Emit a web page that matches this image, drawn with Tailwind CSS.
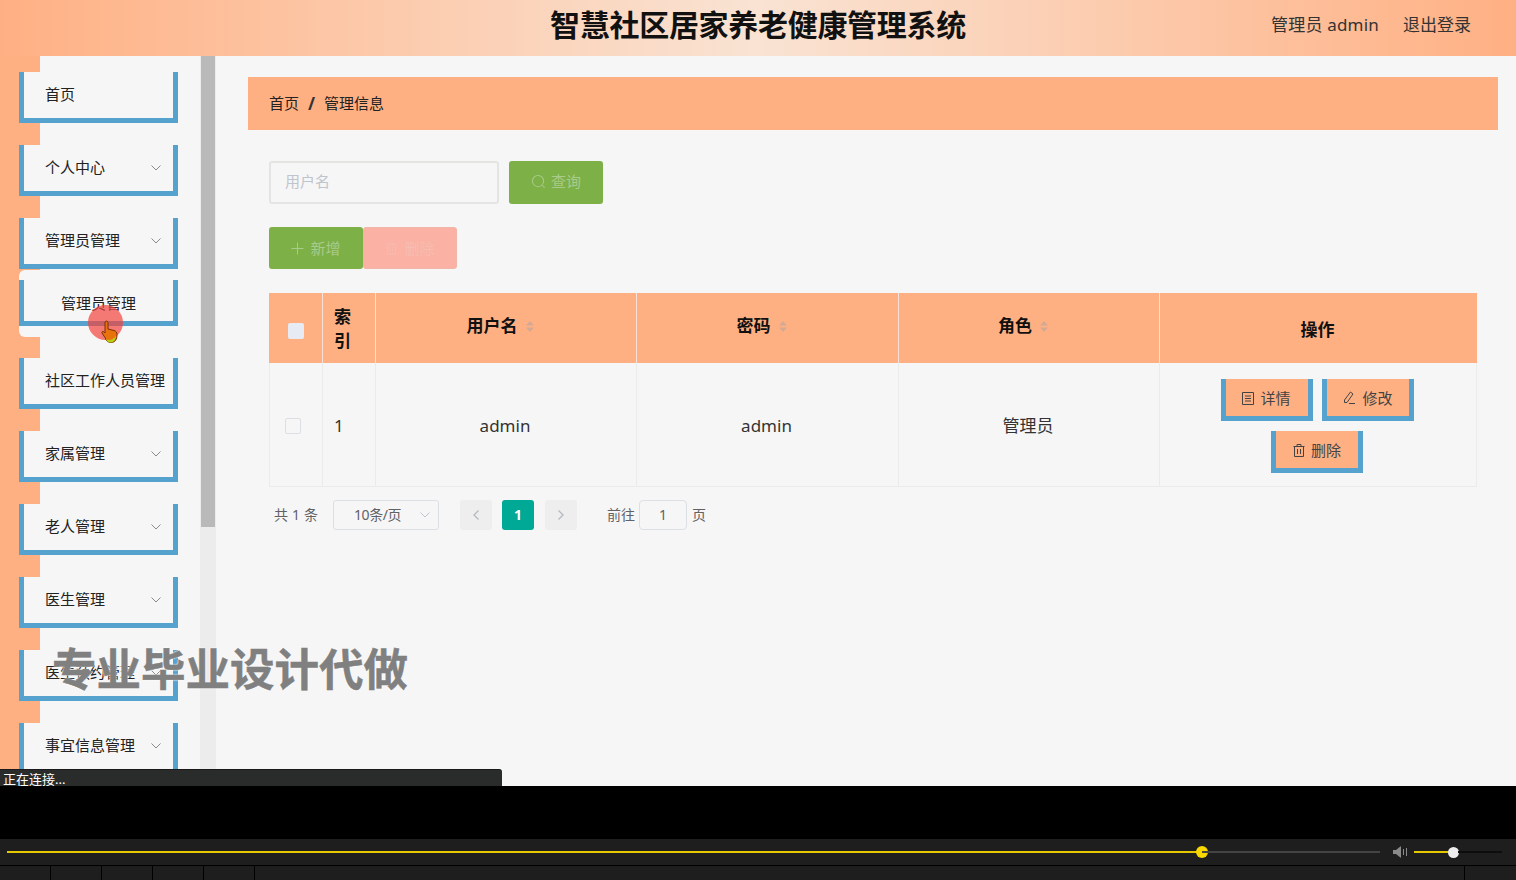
<!DOCTYPE html>
<html lang="zh-CN">
<head>
  <meta charset="utf-8" />
  <title>智慧社区居家养老健康管理系统</title>
  <script src="https://cdn.jsdelivr.net/npm/@tailwindcss/browser@4"></script>
</head>
<body class="w-[1516px] h-[880px] overflow-hidden bg-black font-['Noto_Sans','Noto_Sans_CJK_SC',sans-serif] text-[#303133]">

  <!-- PAGE -->
  <div class="relative h-[786px] flex flex-col overflow-visible bg-[#f6f6f6]">

    <!-- header -->
    <header class="h-14 shrink-0 pb-1.5 grid grid-cols-[1fr_auto_1fr] items-center bg-[linear-gradient(to_right,#ffb083,#f9e3d3_50%,#ffb083)]">
      <div></div>
      <h1 class="text-[30px] leading-none font-bold text-[#111] tracking-[-0.3px]">智慧社区居家养老健康管理系统</h1>
      <div class="flex justify-end items-center gap-6 pr-[45px] text-[17px] text-[#333]">
        <span class="tracking-[0.2px]">管理员 admin</span>
        <span>退出登录</span>
      </div>
    </header>

    <div class="flex h-[730px] overflow-hidden">
      <!-- sidebar -->
      <nav class="w-[200px] shrink-0 pl-[19px] pt-4 text-[15px] text-[#222] overflow-hidden bg-[linear-gradient(to_right,#ffb083_40px,#f6f6f6_40px)]">
        <div class="w-[159px] h-[51px] mb-[22px] flex items-center pl-[21px] pr-3 justify-between bg-[#f6f6f6] border-x-[5px] border-b-[5px] border-[#56a2cf]"><span class="pb-px">首页</span></div>
        <div class="w-[159px] h-[51px] mb-[22px] flex items-center pl-[21px] pr-3 justify-between bg-[#f6f6f6] border-x-[5px] border-b-[5px] border-[#56a2cf]"><span class="pb-px">个人中心</span><svg class="w-[10px] h-[6px] text-[#8a8a8a]" viewBox="0 0 10 6" fill="none" stroke="currentColor"><path d="M.5.5 5 5 9.5.5"/></svg></div>
        <div class="w-[159px] h-[51px] mb-px flex items-center pl-[21px] pr-3 justify-between bg-[#f6f6f6] border-x-[5px] border-b-[5px] border-[#56a2cf]"><span class="pb-px">管理员管理</span><svg class="w-[10px] h-[6px] text-[#8a8a8a]" viewBox="0 0 10 6" fill="none" stroke="currentColor"><path d="M.5.5 5 5 9.5.5"/></svg></div>
        <div class="w-[181px] h-[67px] pt-[10px] mb-[21px] bg-[#f6f6f6] rounded-l-md">
          <div class="w-[159px] h-[46px] flex items-center pl-[37px] border-x-[5px] border-b-[5px] border-[#56a2cf]"><span class="pt-[5px]">管理员管理</span></div>
        </div>
        <div class="w-[159px] h-[51px] mb-[22px] flex items-center pl-[21px] bg-[#f6f6f6] border-x-[5px] border-b-[5px] border-[#56a2cf]"><span class="pb-px whitespace-nowrap">社区工作人员管理</span></div>
        <div class="w-[159px] h-[51px] mb-[22px] flex items-center pl-[21px] pr-3 justify-between bg-[#f6f6f6] border-x-[5px] border-b-[5px] border-[#56a2cf]"><span class="pb-px">家属管理</span><svg class="w-[10px] h-[6px] text-[#8a8a8a]" viewBox="0 0 10 6" fill="none" stroke="currentColor"><path d="M.5.5 5 5 9.5.5"/></svg></div>
        <div class="w-[159px] h-[51px] mb-[22px] flex items-center pl-[21px] pr-3 justify-between bg-[#f6f6f6] border-x-[5px] border-b-[5px] border-[#56a2cf]"><span class="pb-px">老人管理</span><svg class="w-[10px] h-[6px] text-[#8a8a8a]" viewBox="0 0 10 6" fill="none" stroke="currentColor"><path d="M.5.5 5 5 9.5.5"/></svg></div>
        <div class="w-[159px] h-[51px] mb-[22px] flex items-center pl-[21px] pr-3 justify-between bg-[#f6f6f6] border-x-[5px] border-b-[5px] border-[#56a2cf]"><span class="pb-px">医生管理</span><svg class="w-[10px] h-[6px] text-[#8a8a8a]" viewBox="0 0 10 6" fill="none" stroke="currentColor"><path d="M.5.5 5 5 9.5.5"/></svg></div>
        <div class="w-[159px] h-[51px] mb-[22px] flex items-center pl-[21px] pr-3 justify-between bg-[#f6f6f6] border-x-[5px] border-b-[5px] border-[#56a2cf]"><span class="pb-px">医生预约管理</span><svg class="w-[10px] h-[6px] text-[#8a8a8a]" viewBox="0 0 10 6" fill="none" stroke="currentColor"><path d="M.5.5 5 5 9.5.5"/></svg></div>
        <div class="w-[159px] h-[51px] mb-[22px] flex items-center pl-[21px] pr-3 justify-between bg-[#f6f6f6] border-x-[5px] border-b-[5px] border-[#56a2cf]"><span class="pb-px">事宜信息管理</span><svg class="w-[10px] h-[6px] text-[#8a8a8a]" viewBox="0 0 10 6" fill="none" stroke="currentColor"><path d="M.5.5 5 5 9.5.5"/></svg></div>
      </nav>

      <!-- scrollbar -->
      <div class="w-4 shrink-0 bg-[#ececec]">
        <div class="w-[14px] ml-px h-[471px] bg-[#b9b9b9]"></div>
      </div>

      <!-- main -->
      <main class="flex-1 pl-8 pt-[21px]">
        <div class="w-[1250px] h-[53px] flex items-center gap-[9px] pl-[21px] bg-[#ffb083] text-[15px] text-[#222]">
          <span>首页</span><span class="font-bold text-[17px] text-[#333]">/</span><span>管理信息</span>
        </div>

        <div class="pl-[21px]">
          <!-- search -->
          <div class="mt-[31px] flex gap-[10px]">
            <div class="w-[230px] h-[43px] pb-0.5 flex items-center pl-[14px] border-2 border-[#e4e4e2] rounded-[3px] text-[15px] text-[#c0c4cc]">用户名</div>
            <button class="w-[94px] h-[43px] pb-0.5 flex items-center justify-center gap-[5px] bg-[#7db046] rounded-[3px] text-[15px] text-[#a9cb8b]">
              <svg class="w-[15px] h-[15px]" viewBox="0 0 16 16" fill="none" stroke="currentColor" stroke-width="1.1"><circle cx="7.5" cy="7.5" r="6"/><path d="m12 12 2.5 2.5"/></svg>
              查询
            </button>
          </div>

          <!-- actions -->
          <div class="mt-[23px] flex">
            <button class="w-[94px] h-[42px] flex items-center justify-center gap-[6px] bg-[#7db046] rounded-[3px] text-[15px] text-[#a9cb8b]">
              <svg class="w-[13px] h-[13px]" viewBox="0 0 14 14" fill="none" stroke="currentColor" stroke-width="1.1"><path d="M7 .5v13M.5 7h13"/></svg>
              新增
            </button>
            <button class="w-[94px] h-[42px] flex items-center justify-center gap-[6px] bg-[#fbb1a3] border border-[#f1b5a8] rounded-[3px] text-[15px] text-[#f6bdb1]">
              <svg class="w-[13px] h-[13px]" viewBox="0 0 14 14" fill="none" stroke="currentColor"><path d="M1.5 3h11M5 3V1h4v2M2.5 3v10h9V3M5.5 5.5v5M8.5 5.5v5"/></svg>
              删除
            </button>
          </div>

          <!-- table -->
          <table class="mt-6 w-[1208px] table-fixed border-separate border-spacing-0 text-[17px]">
            <thead>
              <tr class="h-[70px] bg-[#ffb083] text-[#111]">
                <th class="w-[54px] border-r border-[#f6e2d6]"><span class="block w-4 h-4 ml-[19px] mt-1.5 bg-[#e6ebf4] rounded-[2px]"></span></th>
                <th class="w-[53px] border-r border-[#f6e2d6] pl-[11px] pr-3 pt-0.5 text-left font-bold leading-6">索引</th>
                <th class="w-[261px] border-r border-[#f6e2d6] font-bold pb-1 pr-[12px]">
                  <span class="inline-flex items-center gap-2">用户名
                    <svg class="w-2 h-[11px] text-[#d3a994]" viewBox="0 0 8 11" fill="currentColor"><path d="M4 0 8 4.5H0zM4 11 0 6.500h8z"/></svg></span>
                </th>
                <th class="w-[262px] border-r border-[#f6e2d6] font-bold pb-1 pr-[12px]">
                  <span class="inline-flex items-center gap-2">密码
                    <svg class="w-2 h-[11px] text-[#d3a994]" viewBox="0 0 8 11" fill="currentColor"><path d="M4 0 8 4.5H0zM4 11 0 6.500h8z"/></svg></span>
                </th>
                <th class="w-[261px] border-r border-[#f6e2d6] font-bold pb-1 pr-[12px]">
                  <span class="inline-flex items-center gap-2">角色
                    <svg class="w-2 h-[11px] text-[#d3a994]" viewBox="0 0 8 11" fill="currentColor"><path d="M4 0 8 4.5H0zM4 11 0 6.500h8z"/></svg></span>
                </th>
                <th class="font-bold pt-1 pr-0.5">操作</th>
              </tr>
            </thead>
            <tbody>
              <tr class="h-[124px] text-[#333]">
                <td class="border-l border-r border-b border-[#ebebeb]"><span class="block w-4 h-4 ml-[15px] mt-[3px] border border-[#dcdfe6] rounded-[2px]"></span></td>
                <td class="border-r border-b border-[#ebebeb] pl-[11px] pt-0.5">1</td>
                <td class="border-r border-b border-[#ebebeb] pt-0.5 pr-0.5 text-center">admin</td>
                <td class="border-r border-b border-[#ebebeb] pt-0.5 pr-0.5 text-center">admin</td>
                <td class="border-r border-b border-[#ebebeb] pt-0.5 pr-0.5 text-center">管理员</td>
                <td class="border-r border-b border-[#ebebeb] pt-0.5 pr-0.5">
                  <div class="w-[220px] mx-auto flex flex-wrap justify-center gap-x-[9px] gap-y-[10px] text-[15px] text-[#444]">
                    <button class="w-[92px] h-[42px] pt-0.5 flex items-center justify-center gap-[6px] bg-[#ffb083] border-x-[5px] border-b-[5px] border-[#56a2cf]">
                      <svg class="w-3 h-[13px]" viewBox="0 0 12 13" fill="none" stroke="currentColor"><path d="M.5.5h11v12H.500zM3 4h6M3 6.500h6M3 9h6"/></svg>详情
                    </button>
                    <button class="w-[92px] h-[42px] pt-0.5 flex items-center justify-center gap-[6px] bg-[#ffb083] border-x-[5px] border-b-[5px] border-[#56a2cf]">
                      <svg class="w-[14px] h-[14px]" viewBox="0 0 14 14" fill="none" stroke="currentColor"><path d="M8.500 1 11 3 5 11.500H2.500V9zM7 12.500h6"/></svg>修改
                    </button>
                    <button class="w-[92px] h-[42px] pt-0.5 flex items-center justify-center gap-[6px] bg-[#ffb083] border-x-[5px] border-b-[5px] border-[#56a2cf]">
                      <svg class="w-3 h-[13px]" viewBox="0 0 12 13" fill="none" stroke="currentColor"><path d="M.5 2.500h11M4 2.500V.5h4v2M1.500 2.500v10h9v-10M4.500 5v5M7.500 5v5"/></svg>删除
                    </button>
                  </div>
                </td>
              </tr>
            </tbody>
          </table>

          <!-- pagination -->
          <div class="mt-[13px] h-[30px] flex items-center text-sm text-[#606266]">
            <span class="ml-[5px] w-[59px] tracking-[0.2px]">共 1 条</span>
            <div class="w-[106px] h-[30px] flex items-center justify-between pl-[20px] pr-2 border border-[#dcdfe6] rounded-[3px]">
              <span class="tracking-[-0.4px]">10条/页</span>
              <svg class="w-[10px] h-[6px] text-[#c0c4cc]" viewBox="0 0 10 6" fill="none" stroke="currentColor"><path d="M.5.5 5 5 9.5.5"/></svg>
            </div>
            <div class="ml-[21px] w-8 h-[30px] flex items-center justify-center bg-[#eeeeee] rounded-[3px] text-[#b5b8be]">
              <svg class="w-[6px] h-[10px]" viewBox="0 0 6 10" fill="none" stroke="currentColor" stroke-width="1.300"><path d="M5.500.5 1 5l4.500 4.500"/></svg>
            </div>
            <div class="ml-[10px] w-8 h-[30px] flex items-center justify-center bg-[#00a896] rounded-[3px] text-white font-bold">1</div>
            <div class="ml-[11px] w-8 h-[30px] flex items-center justify-center bg-[#eeeeee] rounded-[3px] text-[#b5b8be]">
              <svg class="w-[6px] h-[10px]" viewBox="0 0 6 10" fill="none" stroke="currentColor" stroke-width="1.300"><path d="M.5.5 5 5 .5 9.500"/></svg>
            </div>
            <span class="ml-[30px]">前往</span>
            <div class="ml-1 w-12 h-[30px] flex items-center justify-center border border-[#dcdfe6] rounded-[4px]">1</div>
            <span class="ml-[5px]">页</span>
          </div>
        </div>
      </main>
    </div>

    <!-- watermark -->
    <div class="absolute left-[52px] top-[640px] text-[44.500px] leading-[57px] font-bold text-[#808080] whitespace-nowrap [-webkit-text-stroke:0.5px_#808080] [text-shadow:0_0_2px_#fff,0_0_2px_#fff]">专业毕业设计代做</div>

    <!-- mouse highlight -->
    <div class="absolute left-[88px] top-[305px] w-[35px] h-[35px] rounded-full bg-[#f4433c]/70"></div>
    <svg class="absolute left-[100px] top-[320px] w-[20px] h-[25px]" viewBox="0 0 20 25">
      <path d="M5 2c1-1.500 3-1 3 .5V9l6 1.500c2 .5 3 2 3 4 0 5-2 8-6 8-3 0-5-2-6-5L2 13c-.500-1.500 1-2 2-1l1 1z" fill="#e8730c" stroke="#7a3000"/>
      <path d="M6 19c3 2 7 1 10-3-.500 4-2.500 6.500-5.500 6.500-2 0-3.500-1.500-4.500-3.500z" fill="#b5d40f"/>
    </svg>

    <!-- status tip -->
    <div class="absolute left-0 bottom-0 w-[502px] h-[17px] bg-[#2a2c2c] border-t border-[#1a1a1a] rounded-tr-[3px] pl-[3px] text-[13px] leading-[19px] text-white overflow-hidden">正在连接...</div>
  </div>

  <!-- PLAYER -->
  <div class="h-[53px] bg-black"></div>
  <div class="h-[26px] flex items-center bg-[#1e1e1e]">
    <div class="ml-[7px] w-[1195px] h-0.5 bg-[#e6c800]"></div>
    <div class="-ml-[6px] w-3 h-3 rounded-full bg-[#f8d800]"></div>
    <div class="-ml-[6px] w-[178px] h-0.5 bg-[#444]"></div>
    <svg class="ml-[13px] w-[15px] h-3 text-[#8a8a8a]" viewBox="0 0 15 12" fill="currentColor"><path d="M0 4h3l5-4v12L3 8H0zM10 3h1v6h-1zM13 2h1v8h-1z"/></svg>
    <div class="ml-[6px] w-[39px] h-0.5 bg-[#e6c800]"></div>
    <div class="-ml-[5px] w-[11px] h-[11px] rounded-full bg-[#eeeeee]"></div>
    <div class="w-11 h-0.5 -ml-px bg-[#0d0d0d]"></div>
  </div>
  <div class="h-[15px] flex bg-[#1e1e1e] border-t border-black">
    <div class="w-[51px] border-r border-black"></div>
    <div class="w-[51px] border-r border-black"></div>
    <div class="w-[51px] border-r border-black"></div>
    <div class="w-[51px] border-r border-black"></div>
    <div class="w-[51px] border-r border-black"></div>
    <div class="w-[1210px] border-r border-black"></div>
  </div>
</body>
</html>
